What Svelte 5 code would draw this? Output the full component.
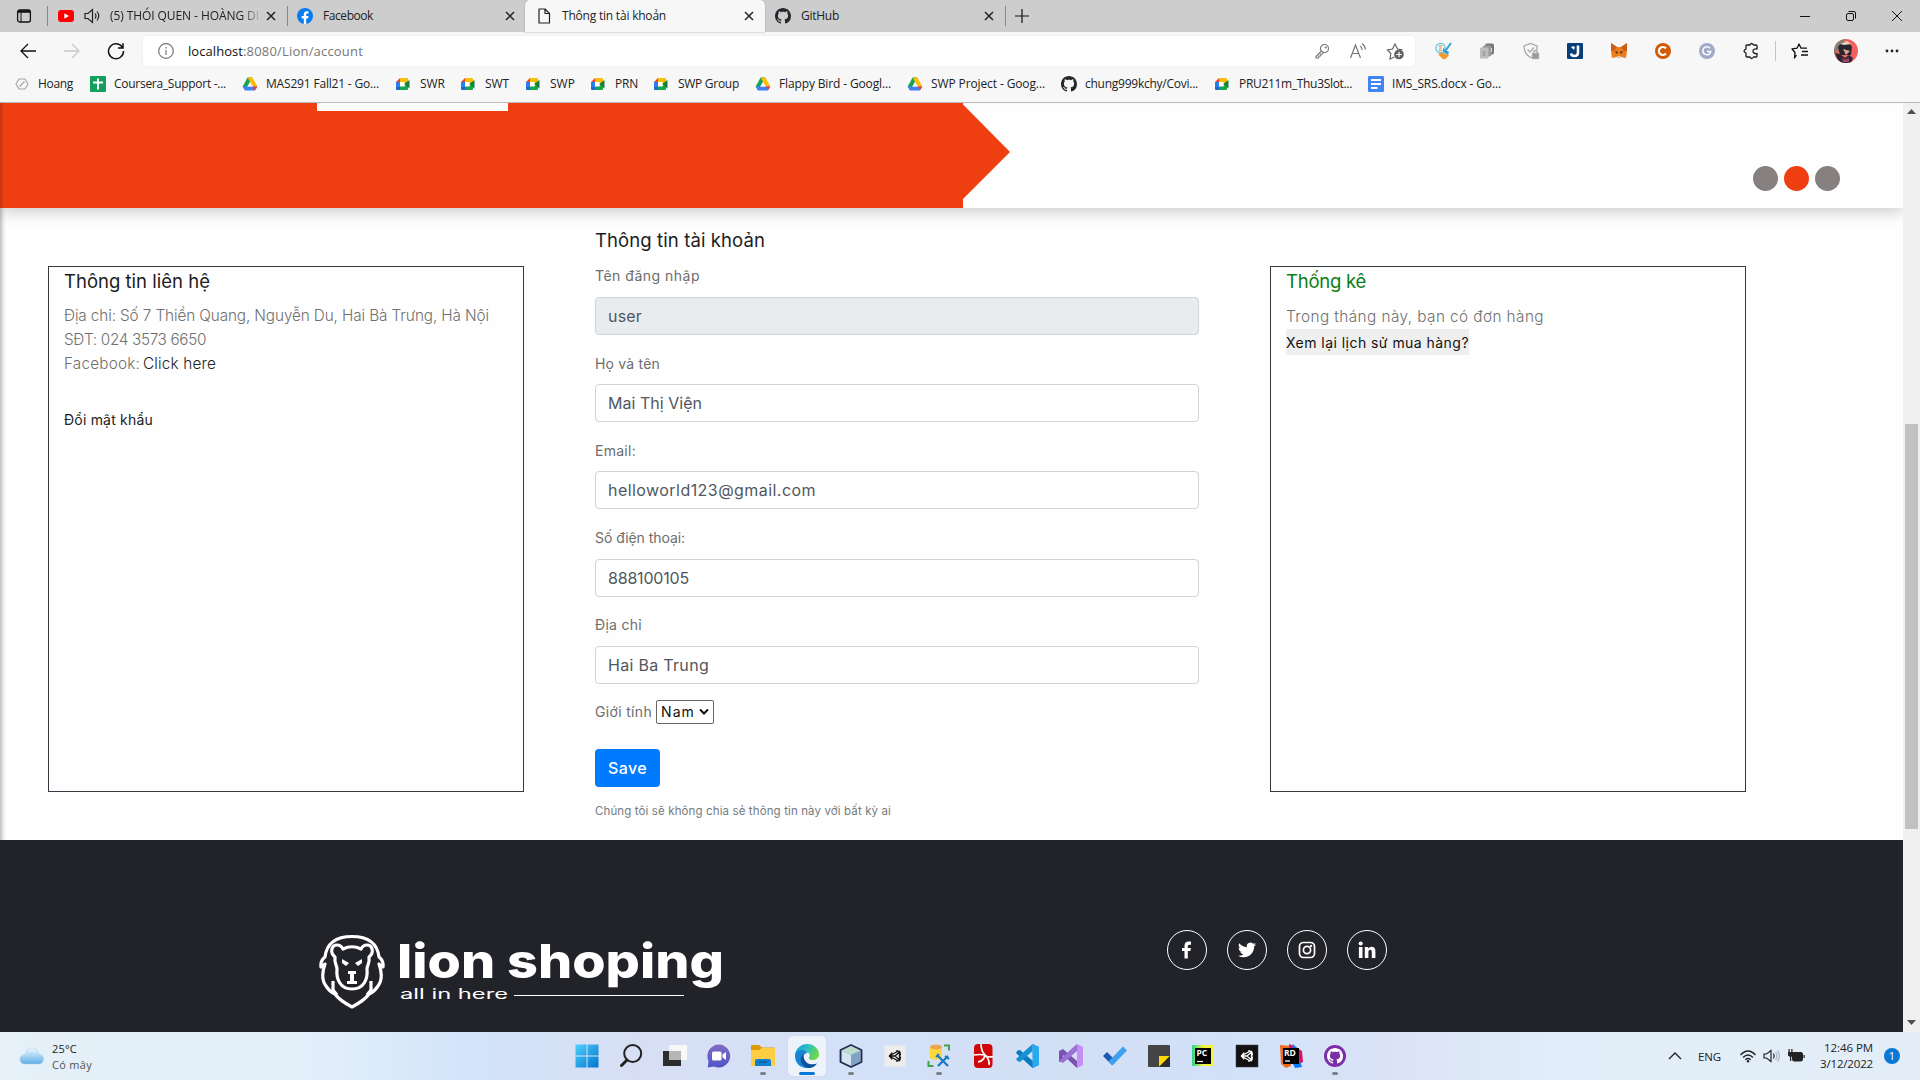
<script>
  // Tracks a label so its run of letters occupies the given width.
  function fit(node, width) {
    if (!width) return;
    const natural = node.getBoundingClientRect().width;
    const spacing = (width - natural) / node.textContent.length;
    node.style.letterSpacing = spacing.toFixed(3) + 'px';
  }

  const bookmarks = [
    { icon: 'none', label: 'Hoang', text: 35, span: 76 },
    { icon: 'sheets', label: 'Coursera_Support -...', text: 112, span: 152 },
    { icon: 'drive', label: 'MAS291 Fall21 - Go...', text: 113, span: 154 },
    { icon: 'meet', label: 'SWR', text: 25, span: 65 },
    { icon: 'meet', label: 'SWT', text: 24, span: 65 },
    { icon: 'meet', label: 'SWP', text: 25, span: 65 },
    { icon: 'meet', label: 'PRN', text: 23, span: 63 },
    { icon: 'meet', label: 'SWP Group', text: 61, span: 101 },
    { icon: 'drive', label: 'Flappy Bird - Googl...', text: 112, span: 152 },
    { icon: 'drive', label: 'SWP Project - Goog...', text: 114, span: 154 },
    { icon: 'github', label: 'chung999kchy/Covi...', text: 113, span: 154 },
    { icon: 'meet', label: 'PRU211m_Thu3Slot...', text: 113, span: 153 },
    { icon: 'docs', label: 'IMS_SRS.docx - Go...', text: 109, span: 140 }
  ];

  const fields = [
    { label: 'Tên đăng nhập', lw: 105, value: 'user', vw: 34, disabled: true },
    { label: 'Họ và tên', lw: 65, value: 'Mai Thị Viện', vw: 94 },
    { label: 'Email:', lw: 41, value: 'helloworld123@gmail.com', vw: 208 },
    { label: 'Số điện thoại:', lw: 90, value: '888100105', vw: 81 },
    { label: 'Địa chỉ', lw: 47, value: 'Hai Ba Trung', vw: 101 }
  ];

  const tools = ['handshake', 'copies', 'shield', 'jbox', 'fox', 'cring', 'gring', 'puzzle'];
  const socials = ['facebook', 'twitter', 'instagram', 'linkedin'];
  const apps = [
    { icon: 'windows' }, { icon: 'search' }, { icon: 'taskview' }, { icon: 'chat' },
    { icon: 'explorer', open: true }, { icon: 'edge', active: true }, { icon: 'netbeans', open: true },
    { icon: 'unitylight' }, { icon: 'sqltools', open: true }, { icon: 'redapp' }, { icon: 'vscode' },
    { icon: 'vstudio' }, { icon: 'todo' }, { icon: 'sticky' }, { icon: 'pycharm' },
    { icon: 'unitydark' }, { icon: 'rider' }, { icon: 'ghdesktop', open: true }
  ];
</script>

{#snippet t(text, width)}<span class="t" use:fit={width}>{text}</span>{/snippet}

{#snippet octocat()}
  <path d="M8 0C3.58 0 0 3.58 0 8c0 3.54 2.29 6.53 5.47 7.59.4.07.55-.17.55-.38 0-.19-.01-.82-.01-1.49-2.01.37-2.53-.49-2.69-.94-.09-.23-.48-.94-.82-1.13-.28-.15-.68-.52-.01-.53.63-.01 1.08.58 1.23.82.72 1.21 1.87.87 2.33.66.07-.52.28-.87.51-1.07-1.78-.2-3.64-.89-3.64-3.95 0-.87.31-1.59.82-2.15-.08-.2-.36-1.02.08-2.12 0 0 .67-.21 2.2.82.64-.18 1.32-.27 2-.27s1.36.09 2 .27c1.53-1.04 2.2-.82 2.2-.82.44 1.1.16 1.92.08 2.12.51.56.82 1.27.82 2.15 0 3.07-1.87 3.75-3.65 3.95.29.25.54.73.54 1.48 0 1.07-.01 1.93-.01 2.2 0 .21.15.46.55.38A8.01 8.01 0 0 0 16 8c0-4.42-3.58-8-8-8z" />
{/snippet}

{#snippet unitymark()}
  <g fill="none" stroke="currentColor" stroke-width="1.3" stroke-linejoin="round">
    <path d="M6 12 15 7.2 M6 12 15 16.8 M16.5 8v8 M6 12h6l4.5-4 M12 12l4.5 4" />
    <path d="M9.2 8.7 6.5 12l2.7 3.3M13 6.800l3.6.6 1 4M13 17.200l3.6-.6 1-4" />
  </g>
{/snippet}

{#snippet icon(name)}
  {#if name === 'none'}
    <svg width="16" height="16" viewBox="0 0 16 16" fill="none" stroke="#a4aaa8" stroke-width="1.2"><path d="M5 3h6l3 5-3 5H5L2 8z" /><path d="M5.5 10.5l5-5" /></svg>
  {:else if name === 'sheets'}
    <svg width="16" height="16" viewBox="0 0 16 16"><rect width="16" height="16" rx="1" fill="#159f5c" /><path d="M8 2.5v11M3 6.5h10" stroke="#fff" stroke-width="2" /></svg>
  {:else if name === 'drive'}
    <svg width="16" height="16" viewBox="0 0 16 16"><path d="M5.6 1.5h4.8L8 6 3.1 14.5.7 10.4z" fill="#18a355" /><path d="M5.6 1.5h4.8l5 9h-4.7z" fill="#fcbd05" /><path d="M.7 10.4h14.7l-2.5 4.1H3.1z" fill="#3f80f4" /><path d="M10.7 10.4h4.7l-2.5 4.1z" fill="#ea4335" /><path d="M8 6l2.6 4.4H5.4z" fill="#f7f7f7" /></svg>
  {:else if name === 'meet'}
    <svg class="meet" width="16" height="16" viewBox="0 0 16 16"><path d="M1 6l4-4v4z" fill="#ea4335" /><path d="M5 2h7q1 0 1 1v4l-4 1V6H5z" fill="#fcbd05" /><path d="M1 6h4v5H1z" fill="#2880f0" /><path d="M1 11h4v3H2q-1 0-1-1z" fill="#1967d2" /><path d="M5 10h4l4-2v5q0 1-1 1H5z" fill="#17a650" /><path d="M9 8l5.5-4v8.5z" fill="#188038" /><path d="M5 6h4.500v4.500H5z" fill="#fff" /></svg>
  {:else if name === 'github'}
    <svg width="16" height="16" viewBox="0 0 16 16" fill="#24292f">{@render octocat()}</svg>
  {:else if name === 'docs'}
    <svg width="16" height="16" viewBox="0 0 16 16"><rect width="16" height="16" rx="1" fill="#4285f4" /><path d="M3 4h10M3 8h10M3 12h6.500" stroke="#fff" stroke-width="1.8" /></svg>
  {:else if name === 'handshake'}
    <svg width="18" height="18" viewBox="0 0 18 18"><circle cx="6.500" cy="6" r="4.700" fill="#e6f5fb" stroke="#62c4ea" stroke-width="1.300" /><path d="M5 3.500h3L5 8.500h3z" stroke="#f2a24e" stroke-width=".9" fill="none" /><path d="M17 1l-5 7" stroke="#2ba3dc" stroke-width="2" /><path d="M9 6l6 4-1 3-5-3z" fill="#2ba3dc" /><path d="M4 12l4-1.500 5 2 2 1-4 4-3-1z" fill="#f39a2e" /></svg>
  {:else if name === 'copies'}
    <svg width="18" height="18" viewBox="0 0 18 18"><rect x="7" y="1.500" width="9" height="11" rx="2" fill="#777" /><rect x="4.500" y="3.500" width="9" height="11" rx="2" fill="#999" /><rect x="2" y="5.500" width="8.500" height="11" rx="1" fill="#bdbdbd" /><path d="M4.500 9h3v5h-3z" fill="#a5a5a5" /><path d="M13.500 6v4" stroke="#ddd" /></svg>
  {:else if name === 'shield'}
    <svg width="18" height="18" viewBox="0 0 18 18" fill="none" stroke="#a8a8a8" stroke-width="1.3"><path d="M10 16c-5-2-8-6-8-12l6.500-2.500L15 4v4" /><path d="M5.500 7.500l2.500 2.500 4-4.500" /><rect x="10.500" y="11.500" width="6" height="5" fill="#999" /><path d="M11.800 11v-1.500q1.700-2 3.400 0V11" /></svg>
  {:else if name === 'jbox'}
    <svg width="18" height="18" viewBox="0 0 18 18"><rect x="1" y="1" width="16" height="16" rx="1" fill="#063e78" /><path d="M12 3.500v7q0 3.500-3.500 3.500Q5.500 14 5 11.500" fill="none" stroke="#fff" stroke-width="2.600" /><path d="M5 5q2-1.500 4 0l-1 3z" fill="#fff" /></svg>
  {:else if name === 'fox'}
    <svg width="18" height="18" viewBox="0 0 18 18"><path d="M1 1l6 4h4l6-4v8l-1 7-5-1-2 1-2-1-5 1-1-7z" fill="#ec7c1e" /><path d="M1 1l6 4-3 4H1zM17 1l-6 4 3 4h3z" fill="#c8601b" /><path d="M5 9l3 1-1 2zM13 9l-3 1 1 2z" fill="#3b2415" /><path d="M7 14h4v2H7z" fill="#ddc9b8" /></svg>
  {:else if name === 'cring'}
    <svg width="18" height="18" viewBox="0 0 18 18"><circle cx="9" cy="9" r="8" fill="#d05a05" /><path d="M12 6.500a4 4 0 1 0 0 5" fill="none" stroke="#fff" stroke-width="2.200" /></svg>
  {:else if name === 'gring'}
    <svg width="18" height="18" viewBox="0 0 18 18"><circle cx="9" cy="9" r="8" fill="#a2a9c9" /><path d="M12 6.300a4 4 0 1 0 .8 3.200H9" fill="none" stroke="#fff" stroke-width="1.500" /></svg>
  {:else if name === 'puzzle'}
    <svg width="18" height="18" viewBox="0 0 18 18" fill="none" stroke="#1c1c1c" stroke-width="1.300" stroke-linejoin="round"><path d="M5 3h3q1.500-3 3.500 0H14q1 0 1 1v3q-4-.5-4 2.200T15 11.500V14q0 1-1 1h-2.500q-2 3-3.500 0H5q-1 0-1-1v-3q-4-1.700 0-4V4q0-1 1-1z" /></svg>
  {:else if name === 'facebook'}
    <svg width="18" height="18" viewBox="0 0 18 18"><path d="M6.500 17.500V10H4V7h2.500V5q0-4.500 4-4.500H13v3.300h-1.700q-1.500 0-1.500 1.500V7h3.100l-.5 3H9.800v7.500z" fill="#fff" /></svg>
  {:else if name === 'twitter'}
    <svg width="18" height="18" viewBox="0 0 24 24"><path fill="#fff" d="M23.950 4.570a10 10 0 0 1-2.820.775 4.958 4.958 0 0 0 2.163-2.723c-.951.555-2.005.959-3.127 1.184a4.920 4.920 0 0 0-8.384 4.482C7.690 8.095 4.067 6.130 1.640 3.162a4.822 4.822 0 0 0-.666 2.475c0 1.710.87 3.213 2.188 4.096a4.904 4.904 0 0 1-2.228-.616v.060a4.923 4.923 0 0 0 3.946 4.827 4.996 4.996 0 0 1-2.212.085 4.936 4.936 0 0 0 4.604 3.417 9.867 9.867 0 0 1-6.102 2.105c-.39 0-.779-.023-1.170-.067a13.995 13.995 0 0 0 7.557 2.209c9.053 0 13.998-7.496 13.998-13.985 0-.210 0-.420-.015-.630A9.935 9.935 0 0 0 24 4.590z" /></svg>
  {:else if name === 'instagram'}
    <svg width="18" height="18" viewBox="0 0 18 18" fill="none" stroke="#fff" stroke-width="1.700"><rect x="1.500" y="1.500" width="15" height="15" rx="4" /><circle cx="9" cy="9" r="3.600" /><circle cx="13" cy="5" r=".4" /></svg>
  {:else if name === 'linkedin'}
    <svg width="18" height="18" viewBox="0 0 18 18" fill="#fff"><circle cx="2.700" cy="2.500" r="2.100" /><path d="M.9 6h3.600v11H.9zM6.800 6h3.400v1.600q1-1.900 3.400-1.900 3.800 0 3.800 4.500V17h-3.600v-6q0-2.200-1.600-2.200-1.800 0-1.800 2.200v6H6.800z" /></svg>
  {:else if name === 'windows'}
    <svg width="24" height="24" viewBox="0 0 24 24"><defs><linearGradient id="win" x1="0" y1="0" x2="1" y2="1" gradientUnits="objectBoundingBox"><stop stop-color="#4fd0fb" /><stop offset="1" stop-color="#0274cf" /></linearGradient></defs><path d="M.5.5h11v11H.5zM12.500.5h11v11h-11zM.5 12.500h11v11H.5zM12.500 12.500h11v11h-11z" fill="url(#win)" /></svg>
  {:else if name === 'search'}
    <svg width="24" height="24" viewBox="0 0 24 24" fill="none" stroke="#222"><circle cx="13.700" cy="9.500" r="8.500" stroke-width="2" /><path d="M8 16l-5.500 5.500" stroke-width="3" stroke-linecap="round" /></svg>
  {:else if name === 'taskview'}
    <svg width="24" height="24" viewBox="0 0 24 24"><path d="M0 7h18v15H0z" fill="#2d2d2d" /><path d="M6 1h18v15H6z" fill="#f8f8f8" /><path d="M6 7h12v9H6z" fill="#b6b6b6" /></svg>
  {:else if name === 'chat'}
    <svg width="24" height="24" viewBox="0 0 24 24"><defs><linearGradient id="chat" x1="0" y1="0" x2="0" y2="1"><stop stop-color="#806dc0" /><stop offset="1" stop-color="#5054c8" /></linearGradient></defs><path d="M12 .5A11.500 11.500 0 1 1 7 22.500L.8 23.500 1.500 17A11.500 11.500 0 0 1 12 .5z" fill="url(#chat)" /><rect x="5" y="7.500" width="9.500" height="9" rx="1.500" fill="#fff" /><path d="M15.500 10.500l3.500-2.500v8l-3.500-2.500z" fill="#fff" /></svg>
  {:else if name === 'explorer'}
    <svg width="24" height="24" viewBox="0 0 24 24"><path d="M0 2q0-1 1-1h7l3 2.500h12q1 0 1 1V8H0z" fill="#dd9a07" /><path d="M0 6h8l3-2h13v17q0 1-1 1H1q-1 0-1-1z" fill="#ffcd43" /><path d="M4 22v-5q0-2 2-2h12q2 0 2 2v5z" fill="#117fd0" /><path d="M8 18h8" stroke="#0a559a" stroke-width="1.500" /></svg>
  {:else if name === 'edge'}
    <svg width="24" height="24" viewBox="0 0 24 24"><defs><linearGradient id="edgetop" x1="0" y1="0" x2="1" y2=".4"><stop stop-color="#199cdb" /><stop offset=".5" stop-color="#28bec8" /><stop offset="1" stop-color="#6bd94b" /></linearGradient></defs><path d="M0 11C1 4 6 0 12 0c7 0 12 5 12 10 0 4-3 6-6.500 6-2.500 0-4-1-3.500-2 2-4-1-7-5-7-4 0-7 2-9 4z" fill="url(#edgetop)" /><path d="M0 12c0-4 3.500-6 7-6 3 0 5 1.500 6 3-3 0-5 2-5 5 0 4 4 7 8 7 3 0 4.500-1 5.500-1.500C19 23 16 24 12 24 5 24 0 19 0 12z" fill="#1685d6" /><path d="M8.500 10C5 12 5 18 8 21q2 2.500 5 3c4 0 7-1.500 9-4.500C15 22 8 19 8.500 10z" fill="#0b4f9f" /></svg>
  {:else if name === 'netbeans'}
    <svg width="24" height="24" viewBox="0 0 24 24"><path d="M12 1l10.500 5v12L12 23 1.500 18V6z" fill="#a9c8dc" stroke="#232950" stroke-width="1.800" stroke-linejoin="round" /><path d="M12 2l9 4.500-9 4-9-4z" fill="#bddaca" /><path d="M12 11l9-4v10.500L12 22z" fill="#7ea3c4" /><path d="M3 7l9 4v10.500l-9-4z" fill="#d3e5ef" /></svg>
  {:else if name === 'unitylight'}
    <svg class="ink" width="24" height="24" viewBox="0 0 24 24"><path d="M1.500 1.500h21v21h-21z" fill="#ededed" />{@render unitymark()}</svg>
  {:else if name === 'unitydark'}
    <svg class="paper" width="24" height="24" viewBox="0 0 24 24"><path d="M1 1h22v22H1z" fill="#111" stroke="#444" stroke-width=".6" />{@render unitymark()}</svg>
  {:else if name === 'sqltools'}
    <svg width="24" height="24" viewBox="0 0 24 24"><path d="M3 3v11q5 3 12 0V3z" fill="#fbd63c" /><ellipse cx="9" cy="3" rx="6" ry="2.500" fill="#efa553" /><path d="M17 1.500h5v5M1.500 17v5h5" fill="none" stroke="#43a047" stroke-width="2" /><path d="M11 12l10 10M21 12L11 22" stroke="#1879c6" stroke-width="2.200" /><path d="M9 13l3-3M18 12l4 3" stroke="#1879c6" stroke-width="2" /></svg>
  {:else if name === 'redapp'}
    <svg width="24" height="24" viewBox="0 0 24 24"><rect x="3" y="0" width="18.500" height="24" rx="4" fill="#cf0709" /><path d="M10 0q0 7 4 11 2 3 8 1.500M3 11q6-1 11 0M14 11q-1 6-7 7M14 11q5 5 4 10" stroke="#fff" stroke-width="1.700" fill="none" /></svg>
  {:else if name === 'vscode'}
    <svg width="24" height="24" viewBox="0 0 24 24"><path d="M17.500 0L24 3v18l-6.500 3L1 9l1.500-2.500L5 6l13 11z" fill="#087bc0" /><path d="M17.500 0v7L5 18l-2.500-1L1 15z" fill="#1592d3" /><path d="M17.500 0L24 3v18l-6.500 3z" fill="#2ba9ee" /></svg>
  {:else if name === 'vstudio'}
    <svg width="24" height="24" viewBox="0 0 24 24"><path d="M0 7l4-2 14 12v7L4 11v6l-4 1z" fill="#7953ae" /><path d="M0 17l4 2L18 7V0L9 8 4 13z" fill="#9b70d5" /><path d="M18 0l6 3v18l-6 3z" fill="#c58ef3" /></svg>
  {:else if name === 'todo'}
    <svg width="24" height="24" viewBox="0 0 24 24"><path d="M0 12l4-4 8 8-3 5z" fill="#1959b8" /><path d="M5.500 17.500L20 2.500l4 4L9.500 21.500z" fill="#3fa1ee" /></svg>
  {:else if name === 'sticky'}
    <svg width="24" height="24" viewBox="0 0 24 24"><rect x="1" y="1" width="22" height="22" rx="1" fill="#444" /><path d="M12 12h11L12 23z" fill="#ffda00" /><path d="M23 12v11H12z" fill="#2d2d2d" /></svg>
  {:else if name === 'pycharm'}
    <svg width="24" height="24" viewBox="0 0 24 24"><defs><linearGradient id="py"><stop stop-color="#2bd58c" /><stop offset=".55" stop-color="#f4f23c" /></linearGradient></defs><path d="M1 1h21v21H1z" fill="url(#py)" /><path d="M4 4h16v16H4z" fill="#000" /><text x="5.500" y="12" class="badge">PC</text><path d="M6 17.500h6" stroke="#fff" stroke-width="1.200" /></svg>
  {:else if name === 'rider'}
    <svg width="24" height="24" viewBox="0 0 24 24"><path d="M1 1l10 1 1 20-5 2-5-4z" fill="#f26a22" /><path d="M10 0l5 2 8 5 1 11-6 3-7-8z" fill="#dd1265" /><path d="M14 0l4 4-5 3zM13 18l8-1 2 6-7 1z" fill="#087cfa" /><path d="M4 4h16v16H4z" fill="#000" /><text x="5" y="12" class="badge">RD</text><path d="M6 17h5" stroke="#fff" stroke-width="1.300" /></svg>
  {:else if name === 'ghdesktop'}
    <svg width="24" height="24" viewBox="0 0 24 24"><circle cx="12" cy="12" r="11" fill="#7b2ea8" /><g transform="translate(4 4)" fill="#fff">{@render octocat()}</g></svg>
  {/if}
{/snippet}

{#snippet cross()}
  <svg width="10" height="10" viewBox="0 0 10 10" fill="none" stroke="#222" stroke-width="1.500"><path d="M1 1l8 8M9 1L1 9" /></svg>
{/snippet}

<div class="screen">
  <div class="tabs">
    <div class="tabmenu">
      <svg width="16" height="16" viewBox="0 0 16 16" fill="none" stroke="#111"><rect x="1.600" y="2" width="12.800" height="12" rx="2" stroke-width="1.300" /><path d="M2 3.500h12" stroke-width="2.500" /><path d="M5 4v10" /></svg>
    </div>
    <div class="tab first">
      <svg width="16" height="16" viewBox="0 0 16 16"><rect y="2" width="16" height="12" rx="3" fill="#f00" /><path d="M6.300 5.300v5.400L11 8z" fill="#fff" /></svg>
      <svg class="speaker" width="17" height="16" viewBox="0 0 17 16" fill="none" stroke="#222" stroke-width="1.200"><path d="M1 5.500h3L8.500 1.500v13L4 10.500H1zM11 5.500q2 2.500 0 5M13 3.500q3.500 4.500 0 9" /></svg>
      <span class="title clipped">{@render t('(5) THÓI QUEN - HOÀNG DI', 149)}</span>
      {@render cross()}
    </div>
    <div class="tab second">
      <svg width="16" height="16" viewBox="0 0 16 16"><circle cx="8" cy="8" r="8" fill="#0a7cf0" /><path d="M6.800 16v-5.500H4.700V8h2.100V6.400Q6.800 3.200 10 3.200h1.500v2.200h-1.100Q9.200 5.400 9.200 6.600V8h2.300l-.4 2.500H9.200V16z" fill="#fff" /></svg>
      <span class="title">{@render t('Facebook', 50)}</span>
      {@render cross()}
    </div>
    <div class="tab current">
      <svg width="16" height="16" viewBox="0 0 16 16" fill="none" stroke="#222" stroke-width="1.200" stroke-linejoin="round"><path d="M3 1h6l4.500 4.500V15H3zM9 1v4.500h4.500" /></svg>
      <span class="title">{@render t('Thông tin tài khoản', 104)}</span>
      {@render cross()}
    </div>
    <div class="tab last">
      {@render icon('github')}
      <span class="title">{@render t('GitHub', 38)}</span>
      {@render cross()}
    </div>
    <svg class="plus" width="14" height="14" viewBox="0 0 14 14" stroke="#111" stroke-width="1.200"><path d="M7 0v14M0 7h14" /></svg>
    <div class="controls">
      <svg width="12" height="12" viewBox="0 0 12 12" stroke="#111"><path d="M1 6.500h10" /></svg>
      <svg width="12" height="12" viewBox="0 0 12 12" fill="none" stroke="#111"><rect x="1.500" y="3.500" width="7" height="7" rx="1.500" /><path d="M3.500 1.500H9q1.500 0 1.500 1.500v5.500" /></svg>
      <svg width="12" height="12" viewBox="0 0 12 12" stroke="#111"><path d="M1 1l10 10M11 1L1 11" /></svg>
    </div>
  </div>

  <div class="toolbar">
    <div class="nav">
      <svg width="18" height="18" viewBox="0 0 18 18" fill="none" stroke="#111" stroke-width="1.300"><path d="M17 9H2M9 2L2 9l7 7" /></svg>
      <svg width="18" height="18" viewBox="0 0 18 18" fill="none" stroke="#c8c8c8" stroke-width="1.300"><path d="M1 9h15M9 2l7 7-7 7" /></svg>
      <svg width="18" height="18" viewBox="0 0 18 18" fill="none" stroke="#111" stroke-width="1.500"><path d="M15.500 5.500A7.500 7.500 0 1 0 16.500 9M16 1.200v4.800h-5" /></svg>
    </div>
    <div class="address">
      <svg width="16" height="16" viewBox="0 0 16 16" fill="none" stroke="#777" stroke-width="1.200"><circle cx="8" cy="8" r="7.300" /><path d="M8 7v5M8 4v1.500" /></svg>
      <span class="url"><b>{@render t('localhost', 55)}</b>{@render t(':8080/Lion/account', 120)}</span>
      <div class="inbar">
        <svg width="16" height="16" viewBox="0 0 16 16" fill="none" stroke="#777" stroke-width="1.200"><circle cx="10.500" cy="5.500" r="4" /><path d="M7.500 8L2 13.500V15h2.500l.5-2h1.500l.5-2h1.500l1-1.500" /><circle cx="11.700" cy="4.500" r=".5" /></svg>
        <svg width="18" height="18" viewBox="0 0 18 18" fill="none" stroke="#777" stroke-width="1.200"><path d="M1.500 16L6.500 3l5 13M3.500 11.500h6M11 4q2 1 2.200 4M13 1.500q3 2 3.500 6" /></svg>
        <svg width="18" height="18" viewBox="0 0 18 18"><path d="M8.500 15l-4.500 2 .8-5.500L1.500 8l5-1L9 2l2.500 5 5 .8" fill="none" stroke="#666" stroke-width="1.200" /><circle cx="13" cy="12.500" r="4.800" fill="#606060" /><path d="M13 9.800v5.400M10.300 12.500h5.400" stroke="#fff" stroke-width="1.200" /></svg>
      </div>
    </div>
    <div class="tools">
      {#each tools as name}{@render icon(name)}{/each}
    </div>
    <div class="profile">
      <svg width="18" height="18" viewBox="0 0 18 18" fill="none" stroke="#111" stroke-width="1.300" stroke-linejoin="round"><path d="M5.500 13l-2 3 .5-5.500L1 7l5-.8L8 2l2 4.200h6M11 9.500h6M10 13h7" /></svg>
      <svg width="24" height="24" viewBox="0 0 24 24"><defs><clipPath id="face"><circle cx="12" cy="12" r="12" /></clipPath></defs><g clip-path="url(#face)"><path d="M0 0h24v24H0z" fill="#f2615f" /><path d="M0 3l6-3h5L8 6l-6 8-2 1z" fill="#857f78" /><path d="M4 8q3-5 8-5 4 1 6 5l-1 8H6z" fill="#2a2630" /><path d="M6 5l7-3 4 3-7 1z" fill="#e9d3c2" /><path d="M9 10l7 2-4 4z" fill="#dba38f" /><path d="M1 14l5 1 5 4 4-3 4 3-2 5H5z" fill="#2d2532" /><path d="M8 19l3 1.500 4-1.500v4H9z" fill="#98476b" /></g></svg>
      <svg width="14" height="4" viewBox="0 0 14 4" fill="#222"><circle cx="2" cy="2" r="1.400" /><circle cx="7" cy="2" r="1.400" /><circle cx="12" cy="2" r="1.400" /></svg>
    </div>
  </div>

  <div class="bookmarks">
    {#each bookmarks as mark}
      <div class="bookmark" style:width="{mark.span}px">{@render icon(mark.icon)}{@render t(mark.label, mark.text)}</div>
    {/each}
  </div>

  <div class="view">
    <div class="page">
      <div class="hero">
        <div class="ribbon"><div class="chip"></div></div>
        <svg class="arrow" width="49" height="105" viewBox="0 0 49 105"><path d="M0 1.500L47 49 0 96z" fill="#ef3e10" /></svg>
        <div class="pager"><i></i><i class="on"></i><i></i></div>
      </div>

      <main>
        <section class="card">
          <h4>{@render t('Thông tin liên hệ', 146)}</h4>
          <p>{@render t('Địa chỉ: Số 7 Thiền Quang, Nguyễn Du, Hai Bà Trưng, Hà Nội', 425)}</p>
          <p>{@render t('SĐT: 024 3573 6650', 142)}</p>
          <p class="pair">{@render t('Facebook:', 76)}<a href="#facebook">{@render t('Click here', 73)}</a></p>
          <a class="change" href="#password">{@render t('Đổi mật khẩu', 89)}</a>
        </section>

        <form>
          <h4>{@render t('Thông tin tài khoản', 170)}</h4>
          {#each fields as field}
            <div class="field">
              <div class="label">{@render t(field.label, field.lw)}</div>
              <div class="input" class:disabled={field.disabled}>{@render t(field.value, field.vw)}</div>
            </div>
          {/each}
          <div class="gender">
            {@render t('Giới tính', 57)}
            <div class="select">{@render t('Nam', 34)}<svg width="10" height="8" viewBox="0 0 10 8" fill="none" stroke="#111" stroke-width="2"><path d="M1 1.500l4 4 4-4" /></svg></div>
          </div>
          <div class="save">{@render t('Save', 39)}</div>
          <small>{@render t('Chúng tôi sẽ không chia sẻ thông tin này với bất kỳ ai', 296)}</small>
        </form>

        <section class="card stats">
          <h4>{@render t('Thống kê', 80)}</h4>
          <p>{@render t('Trong tháng này, bạn có đơn hàng', 258)}</p>
          <div class="history">{@render t('Xem lại lịch sử mua hàng?', 183)}</div>
        </section>
      </main>

      <footer>
        <svg class="brand" width="410" height="80" viewBox="0 0 410 80">
          <g fill="none" stroke="#fff" stroke-width="3.200" stroke-linejoin="round">
            <path d="M6 26C8 10 19 5.500 33 5.500S58 10 60 26q5 4 4 10l-4-3q5 14-1 22-4 6-9 8-4 6-17 13-13-7-17-13-5-2-9-8-6-8-1-22l-4 3q-1-6 4-10z" />
            <path d="M16 26c-6-5-3-12 2-12 3 0 5 2 6 4 6-3 12-3 18 0 1-2 3-4 6-4 5 0 8 7 2 12 1 7-2 8-2 12 1 10-3 20-15 20s-16-10-15-20c0-4-3-5-2-12z" />
            <path d="M14 50v9l4 5M52 50v9l-4 5" />
          </g>
          <path d="M23 28l7 4-3 3-4-3zM43 28l-7 4 3 3 4-3zM29 40h8v3h-2v7h3v3H28v-3h3v-7h-2z" fill="#fff" />
          <text x="78" y="47" class="name" textLength="327" lengthAdjust="spacingAndGlyphs">lion shoping</text>
          <text x="81" y="68" class="motto" textLength="108" lengthAdjust="spacingAndGlyphs">all in here</text>
          <path d="M195 64.500h170" stroke="#fff" />
        </svg>
        <div class="socials">
          {#each socials as name}<span class="ring">{@render icon(name)}</span>{/each}
        </div>
      </footer>
    </div>
    <div class="scrollbar">
      <svg width="9" height="5" viewBox="0 0 9 5"><path d="M0 5h9L4.500 0z" fill="#505050" /></svg>
      <div class="thumb"></div>
      <svg width="9" height="5" viewBox="0 0 9 5"><path d="M0 0h9L4.500 5z" fill="#505050" /></svg>
    </div>
  </div>

  <div class="taskbar">
    <div class="weather">
      <svg width="26" height="20" viewBox="0 0 26 20"><defs><linearGradient id="cloud" x1="0" y1="0" x2="0" y2="1"><stop stop-color="#eef8fe" /><stop offset="1" stop-color="#5eaee6" /></linearGradient></defs><path d="M6 18q-5 0-5-5 0-4 5-4.500Q8 1 14 2q5 .5 6 6 5 1 4.500 5.500-.5 4.500-5 4.500z" fill="url(#cloud)" stroke="#a8d1ed" stroke-width=".5" /></svg>
      <div class="lines">{@render t('25°C', 25)}<span class="dim">{@render t('Có mây', 40)}</span></div>
    </div>
    <div class="apps">
      {#each apps as app}
        <div class="app" class:active={app.active} class:open={app.open}>{@render icon(app.icon)}<i></i></div>
      {/each}
    </div>
    <div class="tray">
      <svg width="14" height="8" viewBox="0 0 14 8" fill="none" stroke="#222" stroke-width="1.400"><path d="M1 7l6-6 6 6" /></svg>
      <span class="lang">{@render t('ENG', 23)}</span>
      <svg class="wifi" width="18" height="14" viewBox="0 0 18 14" fill="none" stroke="#222" stroke-width="1.300"><path d="M1.500 6q7.500-8 15 0M4 8.500q5-5 10 0M6.300 10.800q2.700-2.500 5.400 0" /><circle cx="9" cy="12.300" r="1.200" fill="#222" stroke="none" /></svg>
      <svg width="18" height="14" viewBox="0 0 18 14" fill="none" stroke="#222" stroke-width="1.200"><path d="M1 5h2.500L8 1.500v11L3.500 9H1zM10.500 4.500q1.500 2.500 0 5" /><path d="M12.500 3q3 4 0 8M14.500 1.500q4 5.500 0 11" stroke="#aab4be" /></svg>
      <svg width="18" height="14" viewBox="0 0 18 14"><rect x="5.500" y="3.500" width="10" height="8.500" rx="1.500" fill="#222" stroke="#222" /><path d="M16.500 6h1.200v3h-1.200zM1 3h5v3.500L4.200 8v4H3V8L1 6.500zM1.500 0h1.200v3H1.500zM4.300 0h1.200v3H4.300z" fill="#222" /></svg>
      <div class="clock">{@render t('12:46 PM', 49)}{@render t('3/12/2022', 53)}</div>
      <span class="count">1</span>
    </div>
  </div>
</div>

<style>
  :global(body) { margin: 0; overflow: hidden; }
  .screen { width: 1920px; height: 1080px; display: flex; flex-direction: column; background: #f7f7f7; font-family: "Open Sans", "Noto Sans", sans-serif; font-size: 12px; color: #222; overflow: hidden; }
  svg { display: block; flex: none; }
  .t { display: inline-block; white-space: nowrap; flex: none; }

  .tabs { height: 32px; background: #cdcdcd; display: flex; align-items: center; flex: none; }
  .tabmenu { width: 31px; height: 20px; padding-left: 16px; display: flex; align-items: center; border-right: 1px solid #888; }
  .tab { display: flex; align-items: center; box-sizing: border-box; height: 32px; }
  .title { flex: 1; margin-left: 10px; padding-bottom: 2px; overflow: hidden; display: flex; }
  .first { width: 238px; padding: 0 10px; }
  .first::after, .last::after { content: ""; width: 1px; height: 20px; background: #888; margin-left: 11px; margin-right: -12px; }
  .speaker { margin-left: 10px; }
  .clipped { margin-left: 9px; margin-right: 6px; mask-image: linear-gradient(90deg, #000 88%, transparent 101%); }
  .second { width: 239px; padding: 0 10px 0 11px; }
  .current { width: 240px; padding: 0 11px; background: #f7f7f7; border-radius: 5px 5px 0 0; box-shadow: 0 0 2px #999; }
  .last { width: 239px; padding: 0 10px; }
  .plus { margin-left: 11px; }
  .controls { margin-left: auto; margin-right: 17px; display: flex; gap: 34px; }

  .toolbar { height: 38px; display: flex; align-items: center; flex: none; }
  .nav { width: 124px; padding-left: 19px; display: flex; gap: 26px; }
  .address { width: 1272px; height: 30px; box-sizing: border-box; padding: 0 11px 0 15px; background: #fff; border-radius: 4px; box-shadow: 0 0 2px #e2e2e2; display: flex; align-items: center; }
  .url { margin-left: 14px; font-size: 13px; color: #777; display: flex; }
  .url b { font-weight: 400; color: #111; display: flex; }
  .inbar { margin-left: auto; display: flex; align-items: center; gap: 19px; }
  .tools { margin-left: 19px; display: flex; gap: 26px; }
  .profile { margin-left: 15px; padding-left: 15px; border-left: 1px solid #c4c4c4; height: 20px; display: flex; align-items: center; gap: 25px; }
  .profile svg:nth-child(3) { margin-left: 2px; }

  .bookmarks { height: 32px; padding: 0 0 0 14px; display: flex; border-bottom: 1px solid #bbb; flex: none; }
  .bookmark { height: 28px; display: flex; align-items: center; gap: 8px; flex: none; }
  .bookmark .t { padding-bottom: 2px; }
  .meet { margin-left: -1px; margin-right: 1px; }

  .view { height: 929px; display: flex; flex: none; }
  .page { width: 1903px; background: #fefefe; font-family: Inter, "Noto Sans", sans-serif; display: flex; flex-direction: column; overflow: hidden; box-shadow: inset 5px 0 4px -3px rgba(0, 0, 0, .3); }
  .hero { height: 105px; display: flex; box-shadow: 0 4px 15px rgba(0, 0, 0, .2); flex: none; }
  .ribbon { width: 963px; background: linear-gradient(90deg, #c5350f, #ef3e10 4px); }
  .chip { width: 191px; height: 8px; margin-left: 317px; background: #fcfcfc; }
  .pager { margin: 63px 63px 0 auto; display: flex; gap: 6px; }
  .pager i { width: 25px; height: 25px; border-radius: 50%; background: #868180; }
  .pager i.on { background: #ef3e10; }

  main { height: 632px; display: flex; align-items: flex-start; flex: none; }
  h4, p { margin: 0; font-weight: 400; }
  h4 { font-size: 18.500px; line-height: 24px; color: #1c1c22; display: flex; }
  p { font-size: 15.300px; line-height: 24px; color: #707070; font-weight: 300; display: flex; }
  a { color: #222; text-decoration: none; }
  .card { width: 476px; height: 526px; box-sizing: border-box; margin: 58px 0 0 48px; border: 1px solid #343a40; padding: 2px 15px; flex: none; }
  .card h4 { margin-bottom: 11px; }
  .pair { gap: 3px; font-weight: 300; }
  .pair a { display: flex; }
  .change { display: flex; font-size: 14px; line-height: 24px; margin-top: 32px; }
  form { width: 604px; margin-left: 71px; padding-top: 20px; font-size: 14px; color: #6d6d6d; flex: none; }
  form h4 { margin-bottom: 11px; }
  .field { margin-bottom: 16.200px; }
  .label { height: 24px; display: flex; align-items: center; margin-bottom: 10px; }
  .field + .field .label { margin-bottom: 9px; }
  .input { height: 38px; box-sizing: border-box; border: 1px solid #ced4da; border-radius: 4px; background: #fff; padding-left: 12px; display: flex; align-items: center; font-size: 16px; color: #50575e; }
  .disabled { background: #e9ecef; }
  .gender { display: flex; align-items: center; gap: 4px; height: 24px; }
  .select { width: 58px; height: 24px; box-sizing: border-box; border: 1px solid #666; border-radius: 2px; padding: 0 4px; display: flex; align-items: center; justify-content: space-between; color: #111; background: #fff; }
  .save { width: 65px; height: 38px; margin-top: 25px; border-radius: 4px; background: #007bff; color: #fff; font-size: 16px; font-weight: 500; display: flex; align-items: center; justify-content: center; }
  small { display: flex; margin-top: 12px; font-size: 11.500px; line-height: 24px; color: #757b80; }
  .stats { margin-left: 71px; }
  .stats h4 { color: #0c7d13; margin-bottom: 12px; }
  .history { width: 183px; height: 26px; background: #efefef; color: #111; font-size: 14px; display: flex; align-items: center; }

  footer { height: 192px; background: #222329; display: flex; align-items: flex-start; }
  .brand { margin: 91px 0 0 319px; }
  .name { font: 800 47px Inter, sans-serif; fill: #fff; }
  .motto { font: 400 14px Inter, sans-serif; fill: #fff; }
  .socials { margin: 90px 0 0 438px; display: flex; gap: 20px; }
  .ring { width: 40px; height: 40px; box-sizing: border-box; border: 1px solid #fff; border-radius: 50%; display: flex; align-items: center; justify-content: center; }
  .ring svg { width: 18px; height: 18px; }

  .scrollbar { width: 17px; background: #f0f0f0; display: flex; flex-direction: column; align-items: center; box-sizing: border-box; padding: 6px 0 7px; }
  .thumb { width: 13px; height: 405px; margin: 310px 0 auto; background: #c1c1c1; }

  .taskbar { height: 48px; flex: none; display: flex; align-items: center; background: linear-gradient(90deg, #e5f0f8, #e2eef9 17%, #d2e3fa 25%, #d7dff4 33%, #d5e1f8 42%, #d3dff5 56%, #d2e1f9 64%, #dae3f6 72%, #e2eef9 82%, #e2edf8); }
  .weather { width: 568px; padding-left: 19px; box-sizing: border-box; display: flex; align-items: center; gap: 7px; font-size: 11px; }
  .lines { display: flex; flex-direction: column; align-items: flex-start; line-height: 16px; padding-top: 2px; }
  .dim { color: #555; display: flex; }
  .apps { display: flex; gap: 6px; }
  .app { width: 38px; height: 40px; display: flex; flex-direction: column; align-items: center; padding-top: 8px; box-sizing: border-box; border-radius: 4px; }
  .app i { width: 6px; height: 3px; margin-top: 4px; border-radius: 2px; }
  .open i { background: #7c828c; }
  .active { background: #edf2fb; box-shadow: 0 0 1px #aab; }
  .active i { width: 16px; background: #0878d4; }
  .ink { color: #111; }
  .paper { color: #fff; }
  .badge { font: 700 8.500px "Open Sans", sans-serif; fill: #fff; }
  .tray { margin-left: auto; margin-right: 20px; display: flex; align-items: center; gap: 6px; font-size: 11.500px; }
  .lang { margin: 0 12px 0 10px; display: flex; }
  .clock { display: flex; flex-direction: column; align-items: flex-end; line-height: 16px; margin-left: 9px; width: 53px; }
  .count { width: 16px; height: 16px; margin-left: 5px; border-radius: 50%; background: #0878d4; color: #fff; text-align: center; line-height: 16px; font-size: 11px; }
</style>
